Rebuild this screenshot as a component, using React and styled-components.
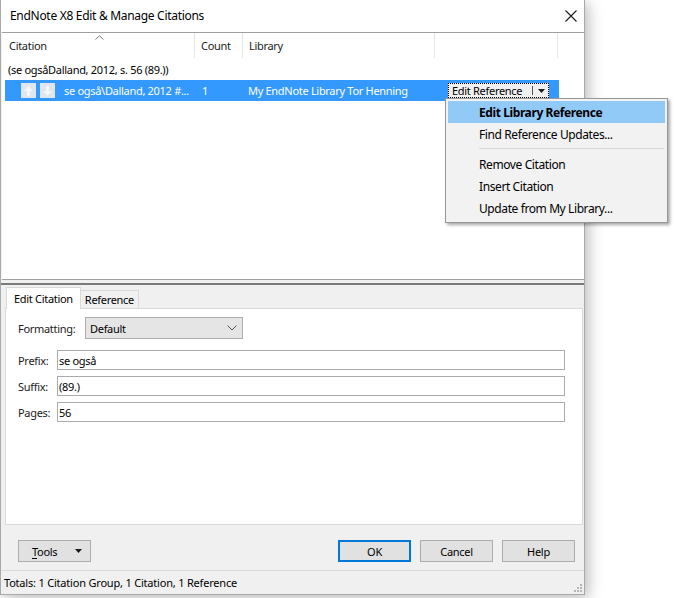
import React from "react";
import styled, { createGlobalStyle } from "styled-components";

const GlobalStyle = createGlobalStyle`
  html, body {
    margin: 0;
    padding: 0;
    background: #ffffff;
  }
  body {
    font-family: "Segoe UI", "Noto Sans", sans-serif;
    font-size: 11px;
    letter-spacing: -0.3px;
    color: #000000;
  }
`;

const Page = styled.div`
  width: 677px;
  height: 598px;
  background: #ffffff;
  overflow: hidden;
`;

const Window = styled.div`
  width: 585px;
  height: 595px;
  box-sizing: border-box;
  border: 1px solid #a9a9a9;
  border-top: none;
  background: #f0f0f0;
  display: flex;
  flex-direction: column;
  box-shadow: 3px 3px 14px rgba(0, 0, 0, 0.28);
  position: relative;
`;

const TitleBar = styled.div`
  height: 32px;
  background: #ffffff;
  display: flex;
  align-items: center;
  justify-content: space-between;
  padding: 0 1px 0 9px;
  flex-shrink: 0;
`;

const Title = styled.span`
  font-size: 12px;
  letter-spacing: -0.3px;
  padding-bottom: 1px;
`;

const CloseBtn = styled.div`
  width: 24px;
  height: 24px;
  display: flex;
  align-items: center;
  justify-content: center;
`;

const ListPane = styled.div`
  height: 246px;
  background: #ffffff;
  border-top: 1px solid #a0a0a0;
  border-bottom: 1px solid #a0a0a0;
  margin-left: 1px;
  position: relative;
  flex-shrink: 0;
`;

const HeaderRow = styled.div`
  display: grid;
  grid-template-columns: 193px 48px 192px 123px 1fr;
  height: 25px;
  align-items: stretch;
`;

const HeaderCell = styled.div`
  position: relative;
  display: flex;
  align-items: center;
  padding-left: ${(p) => p.$pad || 6}px;
  border-right: ${(p) => (p.$last ? "none" : "1px solid #e5e5e5")};
  color: #1a1a1a;
`;

const SortCaret = styled.svg`
  position: absolute;
  left: 93px;
  top: 2px;
`;

const GroupRow = styled.div`
  height: 21px;
  display: flex;
  align-items: center;
  padding-left: 6px;
  margin-top: 1px;
`;

const SelectedRow = styled.div`
  height: 21px;
  margin-left: 3px;
  width: 554px;
  background: #3399ff;
  color: #ffffff;
  display: grid;
  grid-template-columns: 59px 138px 46px 198px 1fr;
  align-items: center;
`;

const ArrowGroup = styled.div`
  display: flex;
  gap: 4px;
  padding-left: 16px;
`;

const ArrowBtn = styled.div`
  width: 15px;
  height: 15px;
  background: #dfe6ee;
  display: flex;
  align-items: center;
  justify-content: center;
`;

const CellText = styled.span`
  white-space: nowrap;
  overflow: hidden;
`;

const RowCombo = styled.div`
  width: 103px;
  height: 17px;
  box-sizing: border-box;
  background: #f0f0f0;
  border: 1px solid #3399ff;
  outline: 1px dotted #000000;
  outline-offset: -2px;
  color: #000000;
  display: flex;
  align-items: center;
  padding-left: 4px;
  margin-left: 1px;
  white-space: nowrap;
`;

const ComboSep = styled.span`
  margin-left: auto;
  width: 1px;
  height: 9px;
  background: #555555;
`;

const ComboArrow = styled.span`
  width: 16px;
  display: flex;
  justify-content: center;
`;

const Menu = styled.div`
  position: absolute;
  left: 443px;
  top: 65px;
  width: 223px;
  box-sizing: border-box;
  background: #f2f2f2;
  border: 1px solid #979797;
  box-shadow: 2px 2px 3px rgba(0, 0, 0, 0.35);
  padding: 2px 2px 3px;
  z-index: 5;
  font-size: 12px;
  letter-spacing: -0.4px;
`;

const MenuItem = styled.div`
  height: 22px;
  display: flex;
  align-items: center;
  padding-left: 31px;
  font-weight: ${(p) => (p.$active ? 700 : 400)};
  background: ${(p) => (p.$active ? "#91c9f7" : "transparent")};
`;

const MenuSep = styled.div`
  height: 1px;
  background: #d7d7d7;
  margin: 3px 1px 4px 31px;
`;

const Splitter = styled.div`
  height: 5px;
  flex-shrink: 0;
  display: flex;
  flex-direction: column;
  justify-content: flex-end;
  &::after {
    content: "";
    height: 2px;
    background: #7a7a7a;
  }
`;

const Lower = styled.div`
  padding: 2px 1px 0 4px;
  flex-shrink: 0;
`;

const TabStrip = styled.div`
  display: flex;
  align-items: flex-end;
  height: 22px;
  padding-left: 1px;
`;

const Tab = styled.div`
  height: ${(p) => (p.$active ? 22 : 19)}px;
  box-sizing: border-box;
  padding: 0 ${(p) => (p.$active ? 7 : 4)}px;
  display: flex;
  align-items: center;
  background: ${(p) => (p.$active ? "#ffffff" : "#f0f0f0")};
  border: 1px solid #d9d9d9;
  border-bottom: ${(p) => (p.$active ? "none" : "1px solid #d9d9d9")};
  margin-left: ${(p) => (p.$active ? 0 : -1)}px;
  position: relative;
  z-index: ${(p) => (p.$active ? 2 : 1)};
`;

const TabPanel = styled.div`
  height: 217px;
  width: 578px;
  box-sizing: border-box;
  background: #ffffff;
  border: 1px solid #d9d9d9;
  margin-top: -1px;
  padding: 8px 17px 0 12px;
  display: flex;
  flex-direction: column;
`;

const FieldRow = styled.div`
  display: flex;
  align-items: center;
  height: ${(p) => p.$h || 20}px;
  margin-bottom: ${(p) => p.$mb || 6}px;
`;

const Label = styled.label`
  width: ${(p) => p.$w || 39}px;
  flex-shrink: 0;
  color: #1a1a1a;
`;

const Select = styled.div`
  width: 158px;
  height: 22px;
  box-sizing: border-box;
  background: #e5e5e5;
  border: 1px solid #adadad;
  display: flex;
  align-items: center;
  justify-content: space-between;
  padding: 0 5px 0 4px;
`;

const Input = styled.div`
  flex: 1;
  height: 20px;
  box-sizing: border-box;
  border: 1px solid #ababab;
  background: #ffffff;
  display: flex;
  align-items: center;
  padding-left: 1px;
`;

const ButtonBar = styled.div`
  display: flex;
  align-items: center;
  padding: 15px 0 0 17px;
  height: 22px;
  flex-shrink: 0;
`;

const Button = styled.div`
  width: ${(p) => p.$w || 73}px;
  height: 22px;
  box-sizing: border-box;
  background: #e1e1e1;
  border: ${(p) => (p.$default ? "2px solid #0078d7" : "1px solid #adadad")};
  display: flex;
  align-items: center;
  justify-content: ${(p) => (p.$split ? "flex-start" : "center")};
  padding-left: ${(p) => (p.$split ? 13 : 0)}px;
  margin-left: ${(p) => p.$ml || 0}px;
`;

const ToolsLabel = styled.span`
  u {
    text-decoration: underline;
    text-underline-offset: 2px;
  }
`;

const ButtonCaret = styled.span`
  display: flex;
  align-items: center;
  margin-left: auto;
  margin-right: 8px;
`;

const StatusBar = styled.div`
  margin-top: 8px;
  border-top: 1px solid #dadada;
  flex: 1;
  display: flex;
  align-items: center;
  padding-left: 3px;
  letter-spacing: -0.2px;
  position: relative;
`;

const Grip = styled.svg`
  position: absolute;
  right: 2px;
  bottom: 2px;
`;

const DownTri = () => (
  <svg width="7" height="4" viewBox="0 0 7 4">
    <path d="M0 0h7L3.5 4z" fill="#1a1a1a" />
  </svg>
);

const Arrow = ({ up }) => (
  <svg width="9" height="10" viewBox="0 0 9 10">
    <path
      d={up ? "M4.5 0L9 5H6v5H3V5H0z" : "M4.5 10L9 5H6V0H3v5H0z"}
      fill="#f4f6f8"
    />
  </svg>
);

export default function App() {
  return (
    <Page>
      <GlobalStyle />
      <Window>
        <TitleBar>
          <Title>EndNote X8 Edit &amp; Manage Citations</Title>
          <CloseBtn>
            <svg width="12" height="12" viewBox="0 0 12 12">
              <path d="M0.5 0.5L11.5 11.5M11.5 0.5L0.5 11.5" stroke="#1a1a1a" strokeWidth="1.1" />
            </svg>
          </CloseBtn>
        </TitleBar>

        <ListPane>
          <HeaderRow>
            <HeaderCell $pad={7}>
              Citation
              <SortCaret width="9" height="5" viewBox="0 0 9 5">
                <path d="M0.5 4.5L4.5 0.8L8.5 4.5" fill="none" stroke="#777" strokeWidth="1" />
              </SortCaret>
            </HeaderCell>
            <HeaderCell>Count</HeaderCell>
            <HeaderCell>Library</HeaderCell>
            <HeaderCell />
            <HeaderCell $last />
          </HeaderRow>

          <GroupRow>(se ogsåDalland, 2012, s. 56 (89.))</GroupRow>

          <SelectedRow>
            <ArrowGroup>
              <ArrowBtn><Arrow up /></ArrowBtn>
              <ArrowBtn><Arrow /></ArrowBtn>
            </ArrowGroup>
            <CellText>se også\Dalland, 2012 #...</CellText>
            <CellText>1</CellText>
            <CellText>My EndNote Library Tor Henning</CellText>
            <RowCombo>
              Edit Reference
              <ComboSep />
              <ComboArrow><DownTri /></ComboArrow>
            </RowCombo>
          </SelectedRow>

          <Menu>
            <MenuItem $active>Edit Library Reference</MenuItem>
            <MenuItem>Find Reference Updates...</MenuItem>
            <MenuSep />
            <MenuItem>Remove Citation</MenuItem>
            <MenuItem>Insert Citation</MenuItem>
            <MenuItem>Update from My Library...</MenuItem>
          </Menu>
        </ListPane>

        <Splitter />

        <Lower>
          <TabStrip>
            <Tab $active>Edit Citation</Tab>
            <Tab>Reference</Tab>
          </TabStrip>
          <TabPanel>
            <FieldRow $h={22} $mb={11}>
              <Label $w={67}>Formatting:</Label>
              <Select>
                Default
                <svg width="10" height="6" viewBox="0 0 10 6">
                  <path d="M0.5 0.5L5 5L9.5 0.5" fill="none" stroke="#555" strokeWidth="1" />
                </svg>
              </Select>
            </FieldRow>
            <FieldRow>
              <Label>Prefix:</Label>
              <Input>se også</Input>
            </FieldRow>
            <FieldRow>
              <Label>Suffix:</Label>
              <Input>(89.)</Input>
            </FieldRow>
            <FieldRow>
              <Label>Pages:</Label>
              <Input>56</Input>
            </FieldRow>
          </TabPanel>
        </Lower>

        <ButtonBar>
          <Button $w={73} $split>
            <ToolsLabel><u>T</u>ools</ToolsLabel>
            <ButtonCaret><DownTri /></ButtonCaret>
          </Button>
          <Button $default $ml={247}>OK</Button>
          <Button $ml={9}>Cancel</Button>
          <Button $ml={9}>Help</Button>
        </ButtonBar>

        <StatusBar>
          Totals: 1 Citation Group, 1 Citation, 1 Reference
          <Grip width="8" height="8" viewBox="0 0 8 8">
            <g fill="#b5b5b5">
              <rect x="6" y="0" width="2" height="2" />
              <rect x="3" y="3" width="2" height="2" />
              <rect x="6" y="3" width="2" height="2" />
              <rect x="0" y="6" width="2" height="2" />
              <rect x="3" y="6" width="2" height="2" />
              <rect x="6" y="6" width="2" height="2" />
            </g>
          </Grip>
        </StatusBar>
      </Window>
    </Page>
  );
}
